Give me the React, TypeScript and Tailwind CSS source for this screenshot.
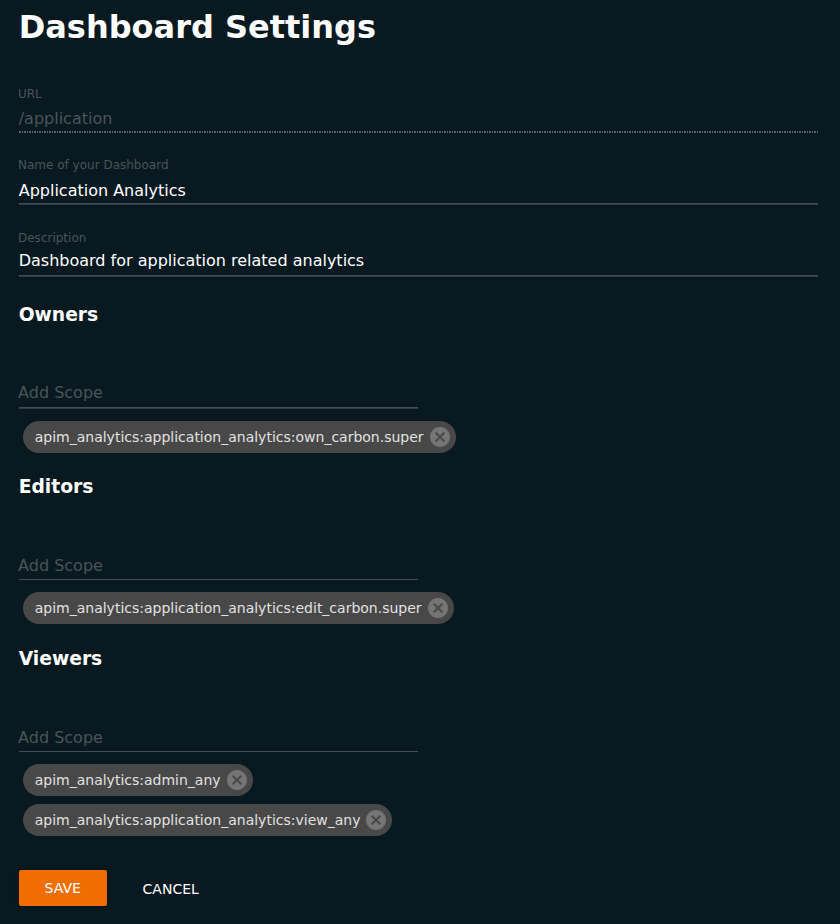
import React from "react";

function Field({ label, value, valueClass, lineClass }: { label: string; value: string; valueClass: string; lineClass: string }) {
  return (
    <div className="w-[799.6px]">
      <div className="-ml-[0.7px] text-[12px] leading-4 text-[#4a5459]">{label}</div>
      <div className={`text-[16px] leading-5 ${valueClass}`}>{value}</div>
      <div className={lineClass} />
    </div>
  );
}

function Chip({ text }: { text: string }) {
  return (
    <div className="flex h-8 w-fit items-center rounded-2xl bg-[#484848] pl-3 pr-1">
      <span className="pr-1 text-[14px] leading-8 text-[#e1e2e2]">{text}</span>
      <svg viewBox="0 0 24 24" className="h-6 w-6 fill-[#757575]">
        <path d="M12 2C6.47 2 2 6.47 2 12s4.47 10 10 10 10-4.47 10-10S17.53 2 12 2zm5 13.59L15.59 17 12 13.41 8.41 17 7 15.59 10.59 12 7 8.41 8.41 7 12 10.59 15.59 7 17 8.41 13.41 12 17 15.59z" />
      </svg>
    </div>
  );
}

function Line() {
  return (
    <div>
      <div className="h-px bg-[#415058]" />
      <div className="h-px bg-[#2e3d44]" />
    </div>
  );
}

function Section({ title, chips, inputClass, thick }: { title: string; chips: string[]; inputClass: string; thick?: boolean }) {
  return (
    <section>
      <h2 className="text-[18.72px] font-bold leading-6">{title}</h2>
      <div className={`w-[400px] text-[16px] leading-5 text-[#4a5459] ${inputClass}`}>
        <div className="-ml-[0.6px]">Add Scope</div>
      </div>
      <div className="w-[399.6px]">{thick ? <Line /> : <div className="h-px bg-[#415058]" />}</div>
      <div className="ml-1 mt-3 flex flex-col gap-2">
        {chips.map((c) => <Chip key={c} text={c} />)}
      </div>
    </section>
  );
}

export default function App() {
  return (
    <main className="h-[924px] w-[840px] overflow-hidden bg-[#081920] pl-[18.7px] pt-[7px] font-['DejaVu_Sans',sans-serif] text-white">
      <h1 className="text-[32px] font-bold leading-10">Dashboard Settings</h1>
      <div className="mt-[39px]">
        <Field label="URL" value="/application" valueClass="mt-[7px] text-[#4a5459]" lineClass="mt-[2px] h-[2px] bg-[repeating-linear-gradient(90deg,#58656b_0px,#58656b_2px,transparent_2px,transparent_3px,#58656b_3px,#58656b_4px,transparent_4px,transparent_5px)]" />
      </div>
      <div className="mt-6">
        <Field label="Name of your Dashboard" value="Application Analytics" valueClass="mt-2" lineClass="mt-[2px] h-[2px] bg-linear-to-b from-[#415058] from-50% to-[#2e3d44] to-50%" />
      </div>
      <div className="mt-[25px]">
        <Field label="Description" value="Dashboard for application related analytics" valueClass="mt-[5px]" lineClass="mt-[4px] h-[2px] bg-linear-to-b from-[#415058] from-50% to-[#2e3d44] to-50%" />
      </div>
      <div className="mt-[26px]">
        <Section title="Owners" thick inputClass="mt-14 pb-1" chips={["apim_analytics:application_analytics:own_carbon.super"]} />
      </div>
      <div className="mt-[22px] flex flex-col gap-[23px]">
        <Section title="Editors" inputClass="mt-[57px] pb-[3px]" chips={["apim_analytics:application_analytics:edit_carbon.super"]} />
        <Section title="Viewers" inputClass="mt-[57px] pb-[3px]" chips={["apim_analytics:admin_any", "apim_analytics:application_analytics:view_any"]} />
      </div>
      <div className="mt-[34px] flex">
        <button className="h-9 w-[88px] rounded-[2px] bg-[#f06e00] text-[14px] shadow-[0_1px_6px_rgba(0,0,0,0.2)]">SAVE</button>
        <button className="ml-5 h-9 w-[88px] pt-[2px] text-[14px]">CANCEL</button>
      </div>
    </main>
  );
}
